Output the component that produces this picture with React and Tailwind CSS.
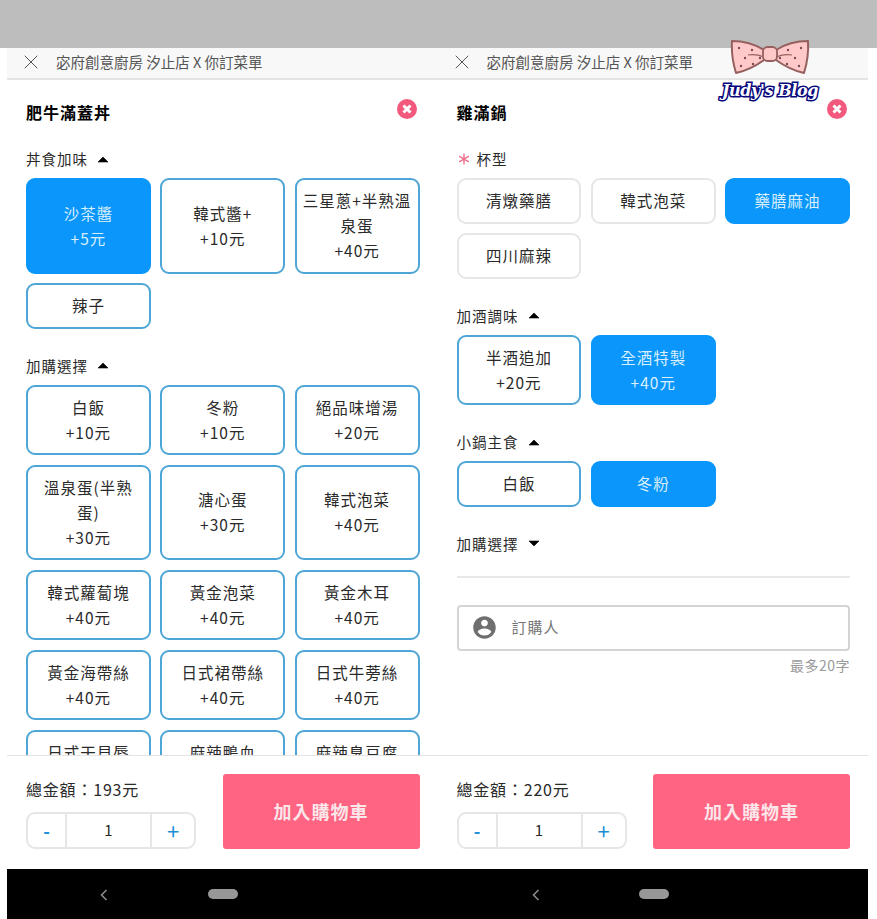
import { X } from "lucide-react";

const leftSauce = [
  { label: "沙茶醬", price: "+5元", active: true },
  { label: "韓式醬+", price: "+10元" },
  { label: "三星蔥+半熟溫泉蛋", price: "+40元" },
  { label: "辣子" },
];

const leftExtras = [
  { label: "白飯", price: "+10元" },
  { label: "冬粉", price: "+10元" },
  { label: "絕品味增湯", price: "+20元" },
  { label: "溫泉蛋(半熟\n蛋)", price: "+30元" },
  { label: "溏心蛋", price: "+30元" },
  { label: "韓式泡菜", price: "+40元" },
  { label: "韓式蘿蔔塊", price: "+40元" },
  { label: "黃金泡菜", price: "+40元" },
  { label: "黃金木耳", price: "+40元" },
  { label: "黃金海帶絲", price: "+40元" },
  { label: "日式裙帶絲", price: "+40元" },
  { label: "日式牛蒡絲", price: "+40元" },
  { label: "日式干貝唇", price: "+40元" },
  { label: "麻辣鴨血", price: "+40元" },
  { label: "麻辣臭豆腐", price: "+40元" },
];

const cupTypes = [
  { label: "清燉藥膳" },
  { label: "韓式泡菜" },
  { label: "藥膳麻油", active: true },
  { label: "四川麻辣" },
];

const wine = [
  { label: "半酒追加", price: "+20元" },
  { label: "全酒特製", price: "+40元", active: true },
];

const staple = [{ label: "白飯" }, { label: "冬粉", active: true }];

function Caret({ down }) {
  return (
    <svg width="12" height="7" viewBox="0 0 12 7" className="ml-[9px]">
      <path d={down ? "M1 1h10L6 6z" : "M1 6h10L6 1z"} fill="#000" stroke="#000" strokeWidth="0.6" strokeLinejoin="round" />
    </svg>
  );
}

function Option({ label, price, active, muted }) {
  const tone = active
    ? "bg-[#0a96fa] border-[#0a96fa] text-[#d8effe]"
    : muted
      ? "bg-white border-[#e6e6e6] text-[#2a2a2a]"
      : "bg-white border-[#4ea6d6] text-[#2a2a2a]";
  return (
    <div className={`flex flex-col items-center justify-center rounded-[9px] border-2 px-[3px] py-[8.25px] text-center text-[15.5px] leading-[25px] tracking-[1px] ${tone}`}>
      <span className="whitespace-pre-line">{label}</span>
      {price && <span>{price}</span>}
    </div>
  );
}

function Section({ title, options, muted, required, collapsed }) {
  return (
    <section className="mt-[25px]">
      <div className="flex h-6 items-center text-[14.5px] tracking-[1px] text-[#2a2a2a]">
        {required && (
          <svg width="12" height="12" viewBox="0 0 12 12" className="mr-[7px] ml-[1px]" stroke="#f0708f" strokeWidth="1.4">
            <path d="M6 0.5v11M1.2 3.2l9.6 5.6M1.2 8.8l9.6-5.6" />
          </svg>
        )}
        <span>{title}</span>
        {!required && <Caret down={collapsed} />}
      </div>
      {options && (
        <div className="mt-[7px] grid grid-cols-3 gap-[9.5px]">
          {options.map((o) => (
            <Option key={o.label} {...o} muted={muted} />
          ))}
        </div>
      )}
    </section>
  );
}

function Footer({ total }) {
  return (
    <div className="flex h-[114px] shrink-0 items-start justify-between border-t border-[#e4e4e4] bg-white pt-[18px] pl-[19px] pr-[18px]">
      <div>
        <div className="mt-[3px] h-6 text-[16px] leading-6 tracking-[0.8px] text-[#2a2a2a]">總金額：{total}元</div>
        <div className="mt-[11px] flex h-[37px] w-[170px] rounded-[9px] border-2 border-[#e6e6e6] text-[18px]">
          <div className="flex w-[39px] items-center justify-center border-r-2 border-[#e6e6e6] font-bold text-[#1d8fd8]">-</div>
          <div className="flex flex-1 items-center justify-center text-[15px] text-[#2a2a2a]">1</div>
          <div className="flex w-[44px] items-center justify-center border-l-2 border-[#e6e6e6] text-[22px] text-[#1d8fd8]">+</div>
        </div>
      </div>
      <div className="flex h-[75px] w-[197px] items-center justify-center rounded-[3px] bg-[#ff6482] text-[18px] font-bold tracking-[1px] text-[#fbe6ea]">
        加入購物車
      </div>
    </div>
  );
}

function NavBar({ left, pill }) {
  return (
    <div className="relative h-[50px] shrink-0 bg-black">
      <svg width="8" height="12" viewBox="0 0 8 12" className="absolute top-[20px]" style={{ left }}>
        <path d="M6.5 1L1.5 6l5 5" fill="none" stroke="#8f8f8f" strokeWidth="1.5" />
      </svg>
      <div className="absolute top-[20px] h-[10px] w-[30px] rounded-full bg-[#979797]" style={{ left: pill }} />
    </div>
  );
}

function Panel({ title, total, nav, children }) {
  return (
    <div className="flex min-w-0 flex-1 flex-col bg-white">
      <div className="flex h-[32px] shrink-0 items-center border-b-2 border-[#e4e4e4] bg-[#f8f8f8] pb-[2px] pl-[12px] text-[14.5px] text-[#555]">
        <X size={24} strokeWidth={1} color="#555" />
        <span className="ml-[13px]">宓府創意廚房 汐止店 X 你訂菜單</span>
      </div>
      <div className="min-h-0 flex-1 overflow-hidden pt-[21px] pl-[19px] pr-[18px]">
        <div className="flex h-[21px] items-start justify-between">
          <h2 className="text-[16px] leading-[22px] font-bold tracking-[1px] text-black">{title}</h2>
          <svg width="20" height="20" viewBox="0 0 20 20" className="mr-[3px] mt-[-2px]">
            <circle cx="10" cy="10" r="10" fill="#f2597d" />
            <path d="M6.5 6.5l7 7M13.5 6.5l-7 7" stroke="#fff" strokeWidth="3" />
          </svg>
        </div>
        {children}
      </div>
      <Footer total={total} />
      <NavBar {...nav} />
    </div>
  );
}

function Logo() {
  const dots = [[739, 48], [745, 58], [752, 50], [741, 66], [753, 64], [760, 58], [801, 48], [795, 58], [788, 50], [799, 66], [787, 64], [780, 58]];
  return (
    <div className="absolute top-[38px] left-[715px] w-[110px]">
      <svg width="110" height="40" viewBox="715 38 110 40" className="block">
        <path d="M732 41Q750 41 764 50V60Q750 70 736 73Q731 57 732 41z" fill="#ffc9c9" stroke="#96605f" strokeWidth="2" strokeLinejoin="round" />
        <path d="M808 41Q790 41 776 50V60Q790 70 804 73Q809 57 808 41z" fill="#ffc9c9" stroke="#96605f" strokeWidth="2" strokeLinejoin="round" />
        <path d="M748 55c6-1 11 0 16 2M792 55c-6-1-11 0-16 2" fill="none" stroke="#96605f" strokeWidth="1.2" />
        <rect x="763" y="47" width="14" height="14" rx="4.5" fill="#ffc9c9" stroke="#96605f" strokeWidth="1.8" />
        {dots.map(([x, y]) => (
          <circle key={`${x}-${y}`} cx={x} cy={y} r="1.2" fill="#7a4a55" />
        ))}
      </svg>
      <div className="mt-[1px] text-center font-['DejaVu_Serif',serif] text-[16px] leading-[24px] font-bold italic tracking-[-0.4px] whitespace-nowrap text-white [-webkit-text-stroke:3px_#06067a] [paint-order:stroke_fill]">
        Judy's Blog
      </div>
    </div>
  );
}

export default function App() {
  return (
    <div className="relative flex h-[919px] w-[877px] flex-col overflow-hidden bg-white font-['Noto_Sans_CJK_TC','Noto_Sans',sans-serif]">
      <div className="h-[48px] shrink-0 bg-[#bdbdbd]" />
      <div className="flex min-h-0 flex-1 pl-[7px] pr-[9px]">
        <Panel title="肥牛滿蓋丼" total="193" nav={{ left: 93, pill: 201 }}>
          <Section title="丼食加味" options={leftSauce} />
          <Section title="加購選擇" options={leftExtras} />
        </Panel>
        <Panel title="雞滿鍋" total="220" nav={{ left: 94, pill: 201 }}>
          <Section title="杯型" options={cupTypes} muted required />
          <Section title="加酒調味" options={wine} />
          <Section title="小鍋主食" options={staple} />
          <Section title="加購選擇" collapsed />
          <div className="mt-[20px] h-[2px] bg-[#e8e8e8]" />
          <div className="mt-[27px] flex h-[46px] items-center rounded-[4px] border-2 border-[#d4d4d4] pl-[12px] text-[15px] tracking-[1px] text-[#777]">
            <svg width="27" height="27" viewBox="0 0 24 24" fill="#6f6f6f">
              <path d="M12 2C6.48 2 2 6.48 2 12s4.48 10 10 10 10-4.48 10-10S17.52 2 12 2zm0 3c1.66 0 3 1.34 3 3s-1.34 3-3 3-3-1.34-3-3 1.34-3 3-3zm0 14.2c-2.5 0-4.71-1.28-6-3.22.03-1.99 4-3.08 6-3.08 1.99 0 5.97 1.09 6 3.08-1.29 1.94-3.5 3.22-6 3.22z" />
            </svg>
            <span className="ml-[14px]">訂購人</span>
          </div>
          <div className="mt-[4px] text-right text-[14px] leading-5 tracking-[0.5px] text-[#999]">最多20字</div>
        </Panel>
      </div>
      <Logo />
    </div>
  );
}
